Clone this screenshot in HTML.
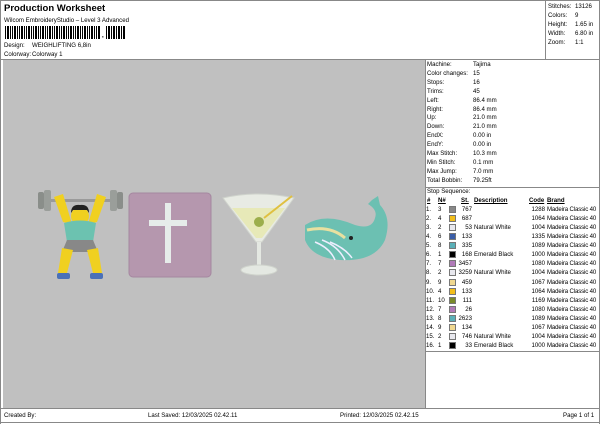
<!DOCTYPE html>
<html><head><style>
*{margin:0;padding:0;box-sizing:border-box}
body{width:600px;height:424px;background:#fff;font-family:"Liberation Sans",Arial,sans-serif;font-size:6.1px;color:#000;position:relative;overflow:hidden}
.a{position:absolute;white-space:nowrap;line-height:9px}
.l{position:absolute;background:#888}
.sw{position:absolute;width:7px;height:7px;border:1px solid #777}
u{text-decoration:underline}
</style></head><body>
<div class="l" style="left:0;top:0;width:600px;height:1px"></div>
<div class="l" style="left:0;top:0;width:1px;height:424px"></div>
<div class="l" style="left:599px;top:0;width:1px;height:424px"></div>
<div class="a" style="left:4px;top:2px;font-size:9.5px;font-weight:bold;line-height:13px">Production Worksheet</div>
<div class="a" style="left:4px;top:16px">Wilcom EmbroideryStudio – Level 3 Advanced</div>
<div style="position:absolute;left:5px;top:26px;width:95px;height:13px;background:repeating-linear-gradient(90deg,#000 0,#000 1px,#fff 1px,#fff 2px,#000 2px,#000 4px,#fff 4px,#fff 5px,#000 5px,#000 6px,#fff 6px,#fff 7px)"></div>
<div class="a" style="left:102px;top:31px;font-weight:bold">,</div>
<div style="position:absolute;left:106px;top:26px;width:20px;height:13px;background:repeating-linear-gradient(90deg,#000 0,#000 1px,#fff 1px,#fff 2px,#000 2px,#000 4px,#fff 4px,#fff 5px)"></div>
<div class="a" style="left:4px;top:41px">Design:</div><div class="a" style="left:32px;top:41px">WEIGHLIFTING 6,8in</div>
<div class="a" style="left:4px;top:50px">Colorway:</div><div class="a" style="left:32px;top:50px">Colorway 1</div>
<div class="l" style="left:545px;top:0;width:1px;height:59px"></div>
<div class="a" style="left:548px;top:2px">Stitches:</div><div class="a" style="left:575px;top:2px">13126</div>
<div class="a" style="left:548px;top:11px">Colors:</div><div class="a" style="left:575px;top:11px">9</div>
<div class="a" style="left:548px;top:20px">Height:</div><div class="a" style="left:575px;top:20px">1.65 in</div>
<div class="a" style="left:548px;top:29px">Width:</div><div class="a" style="left:575px;top:29px">6.80 in</div>
<div class="a" style="left:548px;top:38px">Zoom:</div><div class="a" style="left:575px;top:38px">1:1</div>
<div class="l" style="left:0;top:59px;width:600px;height:1px"></div>
<div style="position:absolute;left:3px;top:60px;width:422px;height:348px;background:#c0c0c0"></div>
<div class="l" style="left:425px;top:60px;width:1px;height:348px"></div>
<svg style="position:absolute;left:0;top:180px" width="425" height="110">
<rect x="46" y="19" width="70" height="3" fill="#9a9a9a"/>
<rect x="38" y="12" width="6" height="17" rx="2" fill="#8a8e8a"/><rect x="44" y="10" width="7" height="21" rx="2" fill="#9a9e9a"/>
<rect x="117" y="12" width="6" height="17" rx="2" fill="#8a8e8a"/><rect x="110" y="10" width="7" height="21" rx="2" fill="#9a9e9a"/>
<path d="M54 17 L63 42 L72 44 L63 14Z" fill="#f0d020"/><path d="M106 17 L97 42 L88 44 L97 14Z" fill="#f0d020"/>
<ellipse cx="80" cy="36" rx="9" ry="9" fill="#f0d020"/><path d="M71 33 Q71 24 80 25 Q89 24 89 33 L87 30 L73 30Z" fill="#222"/>
<path d="M64 43 Q80 38 96 43 L93 62 L67 62Z" fill="#6cc2b0"/>
<path d="M67 60 L93 60 L98 72 L62 72Z" fill="#888"/>
<path d="M62 68 L58 93 L67 93 L73 70Z" fill="#f0d020"/><path d="M98 68 L102 93 L93 93 L87 70Z" fill="#f0d020"/>
<rect x="57" y="93" width="13" height="6" rx="2" fill="#4a70b8"/><rect x="90" y="93" width="13" height="6" rx="2" fill="#4a70b8"/>
<rect x="129" y="13" width="82" height="84" rx="4" fill="#b597ae" stroke="#a587a0"/>
<rect x="165" y="23" width="6" height="60" fill="#e6ecea"/><rect x="149" y="40" width="38" height="6" fill="#e6ecea"/>
<path d="M223 18 Q258 10 294 18 L262 62 L256 62Z" fill="#e8ebe4" stroke="#cfd3cc"/>
<path d="M232 28 L285 28 L262 58 L256 58Z" fill="#e7e9b8"/>
<line x1="264" y1="38" x2="292" y2="16" stroke="#e0c040" stroke-width="2"/>
<circle cx="259" cy="42" r="5" fill="#9cae4c"/>
<rect x="257" y="62" width="4" height="26" fill="#e4e8e2"/><ellipse cx="259" cy="90" rx="18" ry="5" fill="#e4e8e2" stroke="#cfd3cc"/>
<path d="M305 45 Q325 32 355 45 Q372 50 375 38 Q378 30 368 24 L372 20 L378 16 L380 25 Q392 38 385 60 Q375 82 340 80 Q312 78 305 60Z" fill="#6cc0b2"/>
<path d="M307 50 Q330 45 345 58" stroke="#e8e0a0" stroke-width="3" fill="none"/>
<path d="M315 62 Q330 68 335 80 M322 60 Q338 66 345 80 M330 62 Q345 68 352 78" stroke="#eef" stroke-width="1.5" fill="none"/>
<circle cx="351" cy="58" r="2" fill="#222"/>
</svg>
<div id="r"></div>
<div class="l" style="left:426px;top:187px;width:173px;height:1px"></div>
<div class="a" style="left:427px;top:187px">Stop Sequence:</div>
<div class="a" style="left:427px;top:196px;font-weight:bold"><u>#</u></div>
<div class="a" style="left:438px;top:196px;font-weight:bold"><u>N#</u></div>
<div class="a" style="left:461px;top:196px;font-weight:bold"><u>St.</u></div>
<div class="a" style="left:474px;top:196px;font-weight:bold"><u>Description</u></div>
<div class="a" style="left:529px;top:196px;font-weight:bold"><u>Code</u></div>
<div class="a" style="left:547px;top:196px;font-weight:bold"><u>Brand</u></div>
<div class="l" style="left:426px;top:351px;width:173px;height:1px"></div>
<div class="l" style="left:0;top:408px;width:600px;height:1px"></div>
<div class="l" style="left:0;top:422px;width:600px;height:1px"></div>
<div class="a" style="left:4px;top:411px">Created By:</div>
<div class="a" style="left:148px;top:411px">Last Saved: 12/03/2025 02.42.11</div>
<div class="a" style="left:340px;top:411px">Printed: 12/03/2025 02.42.15</div>
<div class="a" style="left:563px;top:411px">Page 1 of 1</div>
<script>
var st=[["Machine:","Tajima"],["Color changes:","15"],["Stops:","16"],["Trims:","45"],["Left:","86.4 mm"],["Right:","86.4 mm"],["Up:","21.0 mm"],["Down:","21.0 mm"],["EndX:","0.00 in"],["EndY:","0.00 in"],["Max Stitch:","10.3 mm"],["Min Stitch:","0.1 mm"],["Max Jump:","7.0 mm"],["Total Bobbin:","79.25ft"]];
var h="";st.forEach(function(s,i){var y=60+i*8.9;h+='<div class="a" style="left:427px;top:'+y+'px">'+s[0]+'</div><div class="a" style="left:473px;top:'+y+'px">'+s[1]+'</div>'});
var rows=[["3","#888","767","","1288"],["4","#f2be1a","687","","1064"],["2","#e8e8ee","53","Natural White","1004"],["6","#3a5ea8","133","","1335"],["8","#5ab0b8","335","","1089"],["1","#000","168","Emerald Black","1000"],["7","#b07ab8","3457","","1080"],["2","#e8e8ee","3259","Natural White","1004"],["9","#f0d890","459","","1067"],["4","#f2be1a","133","","1064"],["10","#7a8a2a","111","","1169"],["7","#b07ab8","26","","1080"],["8","#5ab0b8","2623","","1089"],["9","#f0d890","134","","1067"],["2","#e8e8ee","746","Natural White","1004"],["1","#000","33","Emerald Black","1000"]];
rows.forEach(function(r,i){var y=205+i*9.07;h+='<div class="a" style="left:426px;top:'+y+'px">'+(i+1)+'.</div><div class="a" style="left:438px;top:'+y+'px">'+r[0]+'</div><div class="sw" style="left:449px;top:'+(y+1)+'px;background:'+r[1]+'"></div><div class="a" style="left:455px;width:17px;text-align:right;top:'+y+'px">'+r[2]+'</div><div class="a" style="left:474px;top:'+y+'px">'+r[3]+'</div><div class="a" style="left:525px;width:20px;text-align:right;top:'+y+'px">'+r[4]+'</div><div class="a" style="left:547px;top:'+y+'px;letter-spacing:-0.15px">Madeira Classic 40</div>'});
document.getElementById("r").innerHTML=h;
</script>
</body></html>
